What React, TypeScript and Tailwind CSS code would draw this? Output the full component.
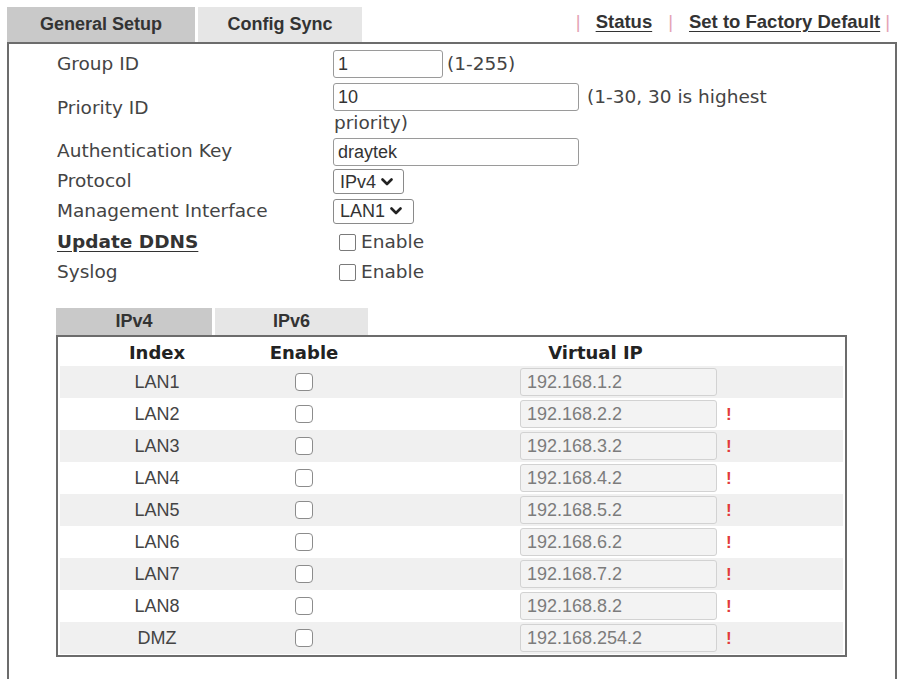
import React from "react";

const verdana = { fontFamily: '"DejaVu Sans", Verdana, sans-serif' };
const arial = { fontFamily: '"Liberation Sans", Arial, sans-serif' };

function Chevron() {
  return (
    <svg width="12" height="8" viewBox="0 0 12 8" className="ml-[5px]">
      <polyline points="1.5,1.5 6,6 10.5,1.5" fill="none" stroke="#222" strokeWidth="2.6" strokeLinecap="round" strokeLinejoin="round" />
    </svg>
  );
}

function Select({ value, width }: { value: string; width: string }) {
  return (
    <div
      className={`flex h-[25px] items-center rounded-[3px] border border-[#8a8a8a] bg-white pl-[6px] text-[18px] leading-none text-[#333] ${width}`}
      style={arial}
    >
      <span>{value}</span>
      <Chevron />
    </div>
  );
}

function TextBox({ value, width }: { value: string; width: string }) {
  return (
    <div
      className={`flex h-[28px] items-center rounded-[3px] border border-[#9a9a9a] bg-white pl-[4px] text-[18px] leading-none text-[#333] ${width}`}
      style={arial}
    >
      {value}
    </div>
  );
}

function CheckEnable() {
  return (
    <div className="ml-[6px] flex items-center">
      <span className="h-[17px] w-[17px] rounded-[2px] border border-[#7a7a7a] bg-white" />
      <span className="ml-[5px] text-[18.5px] leading-none text-[#444]" style={verdana}>
        Enable
      </span>
    </div>
  );
}

function Row({ label, h, children, bold }: { label: string; h: string; children: React.ReactNode; bold?: boolean }) {
  return (
    <div className={`flex items-center ${h}`}>
      <div
        className={`w-[276px] text-[18.5px] leading-none ${bold ? "font-bold text-[#333] underline underline-offset-[3px]" : "text-[#444]"}`}
        style={verdana}
      >
        {label}
      </div>
      <div className="flex items-center">{children}</div>
    </div>
  );
}

const lanRows = [
  { name: "LAN1", ip: "192.168.1.2", warn: false },
  { name: "LAN2", ip: "192.168.2.2", warn: true },
  { name: "LAN3", ip: "192.168.3.2", warn: true },
  { name: "LAN4", ip: "192.168.4.2", warn: true },
  { name: "LAN5", ip: "192.168.5.2", warn: true },
  { name: "LAN6", ip: "192.168.6.2", warn: true },
  { name: "LAN7", ip: "192.168.7.2", warn: true },
  { name: "LAN8", ip: "192.168.8.2", warn: true },
  { name: "DMZ", ip: "192.168.254.2", warn: true },
];

export default function App() {
  return (
    <div className="h-[679px] w-[898px] overflow-hidden bg-white pl-[7px] pt-[7px]">
      <div className="w-[890px]">
        {/* top tab strip and links */}
        <div className="flex h-[35px] items-stretch">
          <div
            className="flex w-[188px] items-center justify-center bg-[#c9c9c9] text-[18px] font-bold text-[#333]"
            style={arial}
          >
            General Setup
          </div>
          <div
            className="ml-[3px] flex w-[164px] items-center justify-center bg-[#e6e6e6] text-[18px] font-bold text-[#333]"
            style={arial}
          >
            Config Sync
          </div>
          <div className="ml-auto flex items-center pr-[7px] pb-[4px] text-[18.5px] font-bold leading-none" style={arial}>
            <span className="font-normal text-[#e4a3b5]">|</span>
            <span className="ml-[15px] text-[#333] underline underline-offset-[3px]">Status</span>
            <span className="ml-[16px] font-normal text-[#e4a3b5]">|</span>
            <span className="ml-[16px] text-[#333] underline underline-offset-[3px]">Set to Factory Default</span>
            <span className="ml-[5px] font-normal text-[#e4a3b5]">|</span>
          </div>
        </div>

        {/* main panel */}
        <div className="h-[700px] border-2 border-[#6c6c6c] pl-[48px] pt-[4px]">
          <Row label="Group ID" h="h-[32px]">
            <TextBox value="1" width="w-[110px]" />
            <span className="ml-[4px] text-[18.5px] leading-none text-[#444]" style={verdana}>
              (1-255)
            </span>
          </Row>

          <div className="flex h-[56px] items-center">
            <div className="w-[276px] text-[18.5px] leading-none text-[#444]" style={verdana}>
              Priority ID
            </div>
            <div className="flex flex-col pt-[2px]">
              <div className="flex items-center">
                <TextBox value="10" width="w-[246px]" />
                <span className="ml-[8px] text-[18.5px] leading-none text-[#444]" style={verdana}>
                  (1-30, 30 is highest
                </span>
              </div>
              <div className="flex h-[24px] items-center pl-[1px] text-[18.5px] leading-none text-[#444]" style={verdana}>
                priority)
              </div>
            </div>
          </div>

          <Row label="Authentication Key" h="h-[31px]">
            <TextBox value="draytek" width="w-[246px]" />
          </Row>
          <Row label="Protocol" h="h-[29px]">
            <Select value="IPv4" width="w-[71px]" />
          </Row>
          <Row label="Management Interface" h="h-[30px]">
            <Select value="LAN1" width="w-[81px]" />
          </Row>
          <Row label="Update DDNS" h="h-[32px]" bold>
            <CheckEnable />
          </Row>
          <Row label="Syslog" h="h-[29px]">
            <CheckEnable />
          </Row>

          {/* IPv4 / IPv6 tabs */}
          <div className="ml-[-1px] mt-[21px] flex h-[27px]">
            <div className="flex w-[156px] items-center justify-center bg-[#c9c9c9] text-[18px] font-bold text-[#333]" style={arial}>
              IPv4
            </div>
            <div className="ml-[3px] flex w-[153px] items-center justify-center bg-[#e6e6e6] text-[18px] font-bold text-[#333]" style={arial}>
              IPv6
            </div>
          </div>

          {/* virtual IP table */}
          <div className="ml-[-1px] w-[791px] border-2 border-[#6c6c6c] px-[2px] pb-px pt-[2px]">
            <div className="grid h-[27px] grid-cols-[194px_100px_1fr] items-center text-[18px] font-bold leading-none text-[#222]" style={verdana}>
              <div className="text-center">Index</div>
              <div className="text-center">Enable</div>
              <div className="pr-[6px] text-center">Virtual IP</div>
            </div>
            {lanRows.map((r, i) => (
              <div
                key={r.name}
                className={`grid h-[32px] grid-cols-[194px_100px_1fr] items-center ${i % 2 === 0 ? "bg-[#f0f0f0]" : "bg-white"}`}
              >
                <div className="text-center text-[18px] leading-none text-[#444]" style={arial}>
                  {r.name}
                </div>
                <div className="flex justify-center">
                  <span className="h-[18px] w-[18px] rounded-[4px] border border-[#8c8c8c] bg-white" />
                </div>
                <div className="flex items-center pl-[166px]">
                  <div
                    className="flex h-[28px] w-[197px] items-center rounded-[3px] border border-[#d2d2d2] bg-[#f3f3f3] pl-[6px] text-[18px] leading-none text-[#7c7c7c]"
                    style={arial}
                  >
                    {r.ip}
                  </div>
                  {r.warn && (
                    <span className="ml-[9px] text-[17px] font-bold leading-none text-[#e23b3b]" style={arial}>
                      !
                    </span>
                  )}
                </div>
              </div>
            ))}
          </div>
        </div>
      </div>
    </div>
  );
}
